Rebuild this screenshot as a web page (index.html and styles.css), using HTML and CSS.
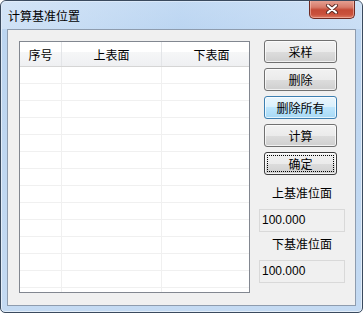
FILE: index.html
```html
<!DOCTYPE html>
<html lang="zh-CN">

<head>
    <meta charset="UTF-8" />
    <meta name="viewport" content="width=device-width, initial-scale=1.0" />
    <title>计算基准位置</title>
    <link rel="stylesheet" href="styles.css">
</head>

<body>
    <div class="window">
        <div class="titlebar">
            <span class="title">计算基准位置</span>
            <button class="btn-close" aria-label="关闭">
                <svg width="14" height="10" viewBox="0 0 14 10">
                    <path d="M3 1.5 L11 8.5 M11 1.5 L3 8.5" stroke="#5a2a24" stroke-width="4" stroke-linecap="round" fill="none" />
                    <path d="M3 1.5 L11 8.5 M11 1.5 L3 8.5" stroke="#ffffff" stroke-width="2.2" stroke-linecap="round" fill="none" />
                </svg>
            </button>
        </div>

        <div class="client">
            <!-- list -->
            <div class="list">
                <div class="list-head">
                    <div class="col col-no">序号</div>
                    <div class="col col-up">上表面</div>
                    <div class="col col-down">下表面</div>
                </div>
                <div class="list-body" id="listBody"></div>
            </div>

            <!-- buttons & results -->
            <div class="side">
                <button class="btn">采样</button>
                <button class="btn">删除</button>
                <button class="btn hover">删除所有</button>
                <button class="btn">计算</button>
                <button class="btn default"><span>确定</span></button>

                <div class="label first">上基准位面</div>
                <div class="field">100.000</div>
                <div class="label">下基准位面</div>
                <div class="field">100.000</div>
            </div>
        </div>
    </div>

    <script>
        // empty rows of the list
        const body = document.getElementById('listBody');
        for (let i = 0; i < 14; i++) {
            const row = document.createElement('div');
            row.className = 'row';
            row.innerHTML = '<div class="cell col-no"></div><div class="cell col-up"></div><div class="cell col-down"></div>';
            body.appendChild(row);
        }
    </script>
</body>

</html>
```

FILE: styles.css
```css
* {
    box-sizing: border-box;
}

html,
body {
    margin: 0;
    padding: 0;
    background: #ffffff;
    font-family: "Noto Sans CJK SC", "Liberation Sans", sans-serif;
    font-size: 12px;
    color: #000000;
}

.window {
    width: 363px;
    height: 313px;
    border: 1px solid #3a4a5e;
    border-radius: 6px 6px 5px 5px;
    padding: 0 6px 6px 6px;
    background: linear-gradient(to bottom, #c7dcf3 0px, #bcd5f0 30px, #c4daf2 100%);
    box-shadow: inset 0 0 0 1px rgba(255, 255, 255, 0.55);
    display: flex;
    flex-direction: column;
    overflow: hidden;
}

.titlebar {
    height: 28px;
    display: flex;
    align-items: flex-start;
    justify-content: space-between;
    background: linear-gradient(to right, rgba(220, 234, 249, 0.6), rgba(185, 213, 244, 0.3) 50%, rgba(210, 228, 248, 0.6));
    margin: 0 -6px;
    padding: 0 6px 0 7px;
}

.title {
    line-height: 28px;
    padding-top: 1px;
    white-space: nowrap;
}

.btn-close {
    width: 46px;
    height: 19px;
    margin-top: -1px;
    margin-right: 1px;
    border: 1px solid #6e2a22;
    border-top: none;
    border-radius: 0 0 5px 5px;
    background: linear-gradient(to bottom, #e7a597 0%, #d77b6a 40%, #c44a36 55%, #c9513c 80%, #dc7a62 100%);
    box-shadow: inset 0 0 0 1px rgba(255, 210, 200, 0.5);
    padding: 0;
    display: flex;
    align-items: center;
    justify-content: center;
}

.client {
    flex: 1;
    border: 1px solid #8e9cae;
    background: #f0f0f0;
    display: flex;
    align-items: flex-start;
    padding: 10px 0 0 11px;
}

/* list view */
.list {
    width: 231px;
    height: 252px;
    margin-top: 1px;
    border: 1px solid #828790;
    background: #ffffff;
    overflow: hidden;
}

.list-head {
    display: flex;
    height: 25px;
    border-bottom: 1px solid #d5d5d5;
    background: linear-gradient(to bottom, #ffffff 0%, #ffffff 40%, #f6f7f8 40%, #eff0f2 100%);
}

.list-head .col {
    flex: none;
    line-height: 22px;
    padding-top: 2px;
    text-align: center;
    border-right: 1px solid #e3e5e8;
    white-space: nowrap;
}

.col-no {
    width: 42px;
}

.col-up {
    width: 100px;
}

.col-down {
    width: 100px;
}

.row {
    display: flex;
    height: 17px;
    border-bottom: 1px solid #f0f0f0;
}

.cell {
    flex: none;
    border-right: 1px solid #f0f0f0;
}

/* side column */
.side {
    width: 86px;
    margin-left: 9px;
    display: flex;
    flex-direction: column;
}

.btn {
    width: 73px;
    height: 23px;
    margin-left: 5px;
    margin-bottom: 5px;
    border: 1px solid #707070;
    border-radius: 3px;
    background: linear-gradient(to bottom, #f2f2f2 0%, #ebebeb 50%, #dddddd 50%, #cfcfcf 100%);
    box-shadow: inset 0 0 0 1px rgba(255, 255, 255, 0.7);
    font-family: inherit;
    font-size: 12px;
    color: #000000;
    padding: 0;
    line-height: 20px;
}

.btn.hover {
    border-color: #3c7fb1;
    background: linear-gradient(to bottom, #eaf6fd 0%, #d9f0fc 50%, #bee6fd 50%, #a7d9f5 100%);
}

.btn.default {
    border-color: #3d3d3d;
    padding: 2px;
}

.btn.default span {
    display: block;
    height: 17px;
    line-height: 16px;
    border: 1px dotted #000000;
}

.label {
    height: 20px;
    line-height: 20px;
    text-align: center;
    margin-top: 2px;
}

.label.first {
    margin-top: 3px;
}

.field {
    width: 86px;
    height: 23px;
    margin-top: 6px;
    border: 1px solid #d9d9d9;
    background: #f0f0f0;
    font-family: "Liberation Sans", sans-serif;
    font-size: 12px;
    line-height: 21px;
    padding-left: 2px;
}
```
